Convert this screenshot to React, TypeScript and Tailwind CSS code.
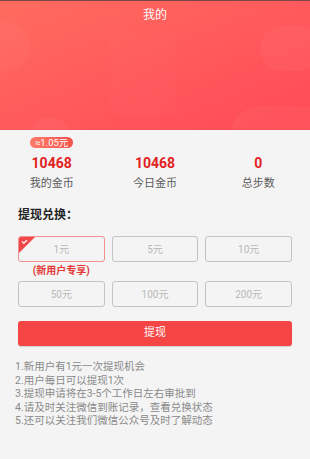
import React from "react";

const amounts = ["1元", "5元", "10元", "50元", "100元", "200元"];

const notes = [
  "1.新用户有1元一次提现机会",
  "2.用户每日可以提现1次",
  "3.提现申请将在3-5个工作日左右审批到",
  "4.请及时关注微信到账记录，查看兑换状态",
  "5.还可以关注我们微信公众号及时了解动态",
];

function Stat({ value, label }: { value: string; label: string }) {
  return (
    <div className="flex flex-col items-center">
      <div className="text-[14px] font-bold leading-[20px] text-[#e21f1f]">{value}</div>
      <div className="mt-[4px] text-[11px] leading-[14px] text-[#5a5a5a]">{label}</div>
    </div>
  );
}

export default function App() {
  return (
    <div
      className="h-[459px] w-[310px] overflow-hidden bg-[#f4f4f4]"
      style={{ fontFamily: 'Roboto, "Noto Sans CJK SC", sans-serif' }}
    >
      {/* Header */}
      <div className="relative h-[130px] overflow-hidden border-t border-[#7a4646] bg-gradient-to-br from-[#ff6b5e] via-[#ff5a5c] to-[#ff4a55]">
        <div className="absolute left-[-20px] top-[20px] h-[50px] w-[50px] rounded-full bg-white/[0.03]" />
        <div className="absolute left-[110px] top-[32px] h-[83px] w-[65px] bg-white/[0.015]" />
        <div className="absolute right-[-10px] top-[25px] h-[45px] w-[60px] rounded-full bg-white/[0.04]" />
        <div className="absolute right-[-30px] top-[105px] h-[60px] w-[110px] rounded-full bg-white/[0.04]" />
        <div className="absolute left-[30px] top-[116px] h-[40px] w-[40px] rounded-full bg-white/[0.04]" />
        <div className="relative pt-[5px] text-center text-[12px] leading-[18px] text-white">我的</div>
      </div>

      {/* Stats */}
      <div className="grid grid-cols-3">
        <div className="flex flex-col items-center">
          <div className="mt-[7px] flex h-[11px] items-center rounded-full bg-gradient-to-r from-[#ff7a68] to-[#f4534b] px-[5px] text-[9.5px] leading-[11px] text-white">
            ≈1.05元
          </div>
        </div>
        <div />
        <div />
      </div>
      <div className="mt-[5px] grid grid-cols-3">
        <Stat value="10468" label="我的金币" />
        <Stat value="10468" label="今日金币" />
        <Stat value="0" label="总步数" />
      </div>

      {/* Exchange */}
      <div className="mt-[16px] px-[18px] text-[12px] font-bold leading-[16px] text-[#222]">提现兑换：</div>

      <div className="mt-[13px] grid grid-cols-3 gap-x-[7px] px-[18px]">
        {amounts.slice(0, 3).map((a, i) => (
          <div
            key={a}
            className={`relative flex h-[26px] items-center justify-center overflow-hidden rounded-[3px] border text-[10px] text-[#b8b8b8] ${
              i === 0 ? "border-[#f39090]" : "border-[#c4c4c4]"
            }`}
          >
            {i === 0 && (
              <svg className="absolute left-0 top-0" width="16" height="16" viewBox="0 0 16 16">
                <polygon points="0,0 16,0 0,16" fill="#f04848" />
                <path d="M3 4.5 L4.8 6.2 L8 3.2" stroke="#fff" strokeWidth="1.2" fill="none" />
              </svg>
            )}
            {a}
          </div>
        ))}
      </div>
      <div className="grid grid-cols-3 gap-x-[7px] px-[18px]">
        <div className="mt-[2px] text-center text-[10px] font-bold leading-[14px] text-[#e23838]">(新用户专享)</div>
      </div>
      <div className="mt-[3px] grid grid-cols-3 gap-x-[7px] px-[18px]">
        {amounts.slice(3).map((a) => (
          <div
            key={a}
            className="flex h-[26px] items-center justify-center rounded-[3px] border border-[#c4c4c4] text-[10px] text-[#b8b8b8]"
          >
            {a}
          </div>
        ))}
      </div>

      <div className="mx-[18px] mt-[14px] flex h-[25px] items-center justify-center rounded-[3px] bg-[#f64545] text-[11px] text-white shadow-[0_1px_1px_rgba(0,0,0,0.15)]">
        提现
      </div>

      <div className="mt-[14px] px-[15px] text-[10.5px] leading-[13.6px] text-[#8a8a8a]">
        {notes.map((n) => (
          <div key={n}>{n}</div>
        ))}
      </div>
    </div>
  );
}
